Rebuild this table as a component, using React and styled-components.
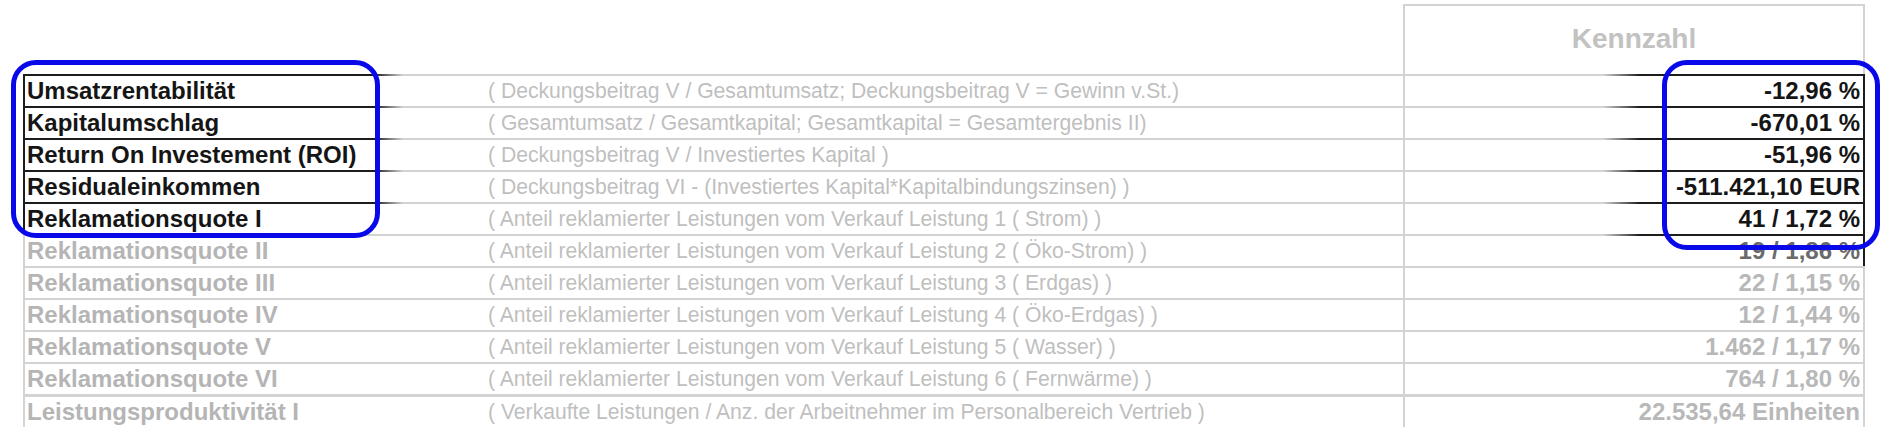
import React from "react";
import styled, { createGlobalStyle } from "styled-components";

const GlobalStyle = createGlobalStyle`
  * { box-sizing: border-box; }
  body {
    margin: 0;
    background: #fff;
    font-family: "Liberation Sans", Arial, sans-serif;
  }
`;

const GRAY = "#d3d3d3";
const DARK = "#1c1c1c";

const lines = {
  normal: `linear-gradient(to right, ${GRAY}, ${GRAY})`,
  hl: `linear-gradient(to right, ${DARK} 0, ${DARK} 350px, ${GRAY} 378px, ${GRAY} 1578px, ${DARK} 1615px, ${DARK} 100%)`,
  tail: `linear-gradient(to right, ${GRAY} 0, ${GRAY} 1578px, ${DARK} 1615px, ${DARK} 100%)`,
};

const Page = styled.div`
  position: relative;
  width: 1885px;
  height: 434px;
  overflow: hidden;
`;

const Table = styled.div`
  margin-left: 23px;
  padding-top: 4px;
  width: 1842px;
`;

const HeaderRow = styled.div`
  display: grid;
  grid-template-columns: 463px 915px 462px;
  padding-left: 2px;
  height: 70px;
`;

const HeaderCell = styled.div`
  grid-column: 3;
  display: flex;
  align-items: center;
  justify-content: center;
  border: 2px solid ${GRAY};
  border-bottom: none;
  font-size: 28px;
  font-weight: bold;
  color: #c2c2c2;
  padding-bottom: 2px;
`;

const Row = styled.div`
  display: grid;
  grid-template-columns: 463px 915px 460px;
  height: ${(p) => (p.$sep ? 33 : 32)}px;
  padding-top: ${(p) => (p.$sep ? 3 : 2)}px;
  background: ${(p) => lines[p.$line]} top left / 100% ${(p) => (p.$sep ? 3 : 2)}px no-repeat;
  border-left: 2px solid ${(p) => (p.$line === "hl" ? DARK : GRAY)};
  border-right: 2px solid ${(p) => (p.$line === "normal" ? GRAY : DARK)};
  line-height: 30px;
  white-space: nowrap;
`;

const Name = styled.div`
  padding-left: 2px;
  font-size: 24px;
  font-weight: bold;
  color: ${(p) => (p.$active ? "#151515" : "#b5b5b5")};
`;

const Formula = styled.div`
  font-size: 21.15px;
  color: #bfbfbf;
`;

const Value = styled.div`
  border-left: 2px solid ${GRAY};
  text-align: right;
  padding-right: 3px;
  font-size: 24px;
  font-weight: bold;
  color: ${(p) => p.$color};
`;

const Marker = styled.div`
  position: absolute;
  left: ${(p) => p.$x}px;
  top: ${(p) => p.$y}px;
  width: ${(p) => p.$w}px;
  height: ${(p) => p.$h}px;
  border: 5px solid #0808e8;
  border-radius: 25px;
  pointer-events: none;
`;

const rows = [
  { name: "Umsatzrentabilität", formula: "( Deckungsbeitrag V / Gesamtumsatz; Deckungsbeitrag V = Gewinn v.St.)", value: "-12,96 %", line: "hl" },
  { name: "Kapitalumschlag", formula: "( Gesamtumsatz / Gesamtkapital; Gesamtkapital = Gesamtergebnis II)", value: "-670,01 %", line: "hl" },
  { name: "Return On Investement (ROI)", formula: "( Deckungsbeitrag V / Investiertes Kapital )", value: "-51,96 %", line: "hl" },
  { name: "Residualeinkommen", formula: "( Deckungsbeitrag VI - (Investiertes Kapital*Kapitalbindungszinsen) )", value: "-511.421,10 EUR", line: "hl" },
  { name: "Reklamationsquote I", formula: "( Anteil reklamierter Leistungen vom Verkauf Leistung 1 ( Strom) )", value: "41 / 1,72 %", line: "hl" },
  { name: "Reklamationsquote II", formula: "( Anteil reklamierter Leistungen vom Verkauf Leistung 2 ( Öko-Strom) )", value: "19 / 1,86 %", line: "tail" },
  { name: "Reklamationsquote III", formula: "( Anteil reklamierter Leistungen vom Verkauf Leistung 3 ( Erdgas) )", value: "22 / 1,15 %", line: "normal" },
  { name: "Reklamationsquote IV", formula: "( Anteil reklamierter Leistungen vom Verkauf Leistung 4 ( Öko-Erdgas) )", value: "12 / 1,44 %", line: "normal" },
  { name: "Reklamationsquote V", formula: "( Anteil reklamierter Leistungen vom Verkauf Leistung 5 ( Wasser) )", value: "1.462 / 1,17 %", line: "normal" },
  { name: "Reklamationsquote VI", formula: "( Anteil reklamierter Leistungen vom Verkauf Leistung 6 ( Fernwärme) )", value: "764 / 1,80 %", line: "normal" },
  { name: "Leistungsproduktivität I", formula: "( Verkaufte Leistungen / Anz. der Arbeitnehmer im Personalbereich  Vertrieb )", value: "22.535,64 Einheiten", line: "normal", sep: true },
];

const valueColor = (line) => (line === "hl" ? "#151515" : line === "tail" ? "#6a6a6a" : "#b8b8b8");

const App = () => {
  return (
    <Page>
      <GlobalStyle />
      <Table>
        <HeaderRow>
          <HeaderCell>Kennzahl</HeaderCell>
        </HeaderRow>
        {rows.map((r) => (
          <Row key={r.name} $line={r.line} $sep={r.sep}>
            <Name $active={r.line === "hl"}>{r.name}</Name>
            <Formula>{r.formula}</Formula>
            <Value $color={valueColor(r.line)}>{r.value}</Value>
          </Row>
        ))}
      </Table>
      <Marker $x={11} $y={60} $w={369} $h={178} />
      <Marker $x={1662} $y={60} $w={218} $h={190} />
    </Page>
  );
};

export default App;
